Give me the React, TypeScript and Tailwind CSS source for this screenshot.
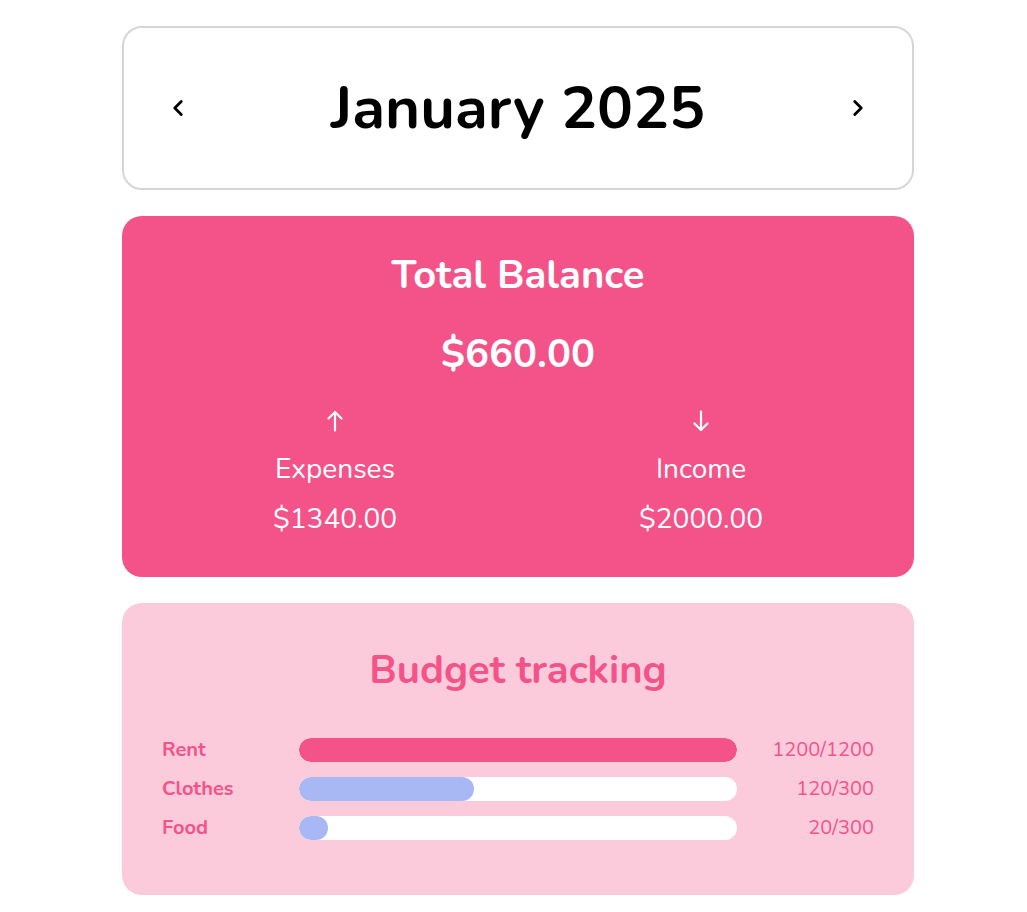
import React from 'react';
import { ChevronLeft, ChevronRight } from 'lucide-react';

interface BudgetRow {
  label: string;
  spent: number;
  limit: number;
}

const budgets: BudgetRow[] = [
  { label: 'Rent', spent: 1200, limit: 1200 },
  { label: 'Clothes', spent: 120, limit: 300 },
  { label: 'Food', spent: 20, limit: 300 },
];

function Arrow({ down = false }: { down?: boolean }) {
  return (
    <svg
      width="16"
      height="22"
      viewBox="0 0 16 22"
      fill="none"
      stroke="currentColor"
      strokeWidth="2.2"
      strokeLinecap="round"
      strokeLinejoin="round"
      className={down ? 'rotate-180' : ''}
    >
      <path d="M8 20.5V2" />
      <path d="M1.5 8.5 8 2l6.5 6.5" />
    </svg>
  );
}

export default function App() {
  return (
    <div className="min-h-[912px] bg-white font-['Nunito','Lato','Noto_Sans',sans-serif]">
      <div className="ml-[122px] w-[792px] pt-[26px] flex flex-col gap-[26px]">
        {/* month switcher */}
        <div className="h-[164px] border-2 border-[#d6d6d6] rounded-[20px] flex items-center justify-between px-[41px]">
          <button className="text-black">
            <ChevronLeft size={26} strokeWidth={2.6} />
          </button>
          <h1 className="text-[60px] font-bold text-black leading-none">January 2025</h1>
          <button className="text-black">
            <ChevronRight size={26} strokeWidth={2.6} />
          </button>
        </div>

        {/* balance */}
        <div className="h-[361px] bg-[#f35388] rounded-[20px] px-[30px] pt-[36px] text-white flex flex-col items-center">
          <h2 className="text-[40px] font-bold leading-[46px]">Total Balance</h2>
          <p className="mt-[33px] text-[40px] font-bold leading-[46px]">$660.00</p>
          <div className="mt-[33px] grid grid-cols-2 w-full">
            <div className="flex flex-col items-center">
              <Arrow />
              <span className="mt-[20px] text-[28px] leading-[34px]">Expenses</span>
              <span className="mt-[16px] text-[28px] leading-[34px]">$1340.00</span>
            </div>
            <div className="flex flex-col items-center">
              <Arrow down />
              <span className="mt-[20px] text-[28px] leading-[34px]">Income</span>
              <span className="mt-[16px] text-[28px] leading-[34px]">$2000.00</span>
            </div>
          </div>
        </div>

        {/* budget tracking */}
        <div className="h-[292px] bg-[#fbcadb] rounded-[20px] px-[40px] pt-[44px]">
          <h2 className="text-center text-[40px] font-bold text-[#f35388] leading-[46px]">Budget tracking</h2>
          <div className="mt-[42px] flex flex-col gap-[15px]">
            {budgets.map((b) => {
              const pct = Math.max((b.spent / b.limit) * 100, 6.5);
              const full = b.spent >= b.limit;
              return (
                <div key={b.label} className="grid grid-cols-[137px_1fr_137px] items-center h-[24px]">
                  <span className="text-[20px] font-bold text-[#f35388]">{b.label}</span>
                  <div className="h-[24px] bg-white rounded-full overflow-hidden">
                    <div
                      className={full ? 'h-full rounded-full bg-[#f35388]' : 'h-full rounded-full bg-[#a8b8f5]'}
                      style={{ width: `${pct}%` }}
                    />
                  </div>
                  <span className="text-right text-[20px] text-[#f35388]">
                    {b.spent}/{b.limit}
                  </span>
                </div>
              );
            })}
          </div>
        </div>
      </div>
      <div className="mt-[17px] border-t border-[#333]" />
    </div>
  );
}
